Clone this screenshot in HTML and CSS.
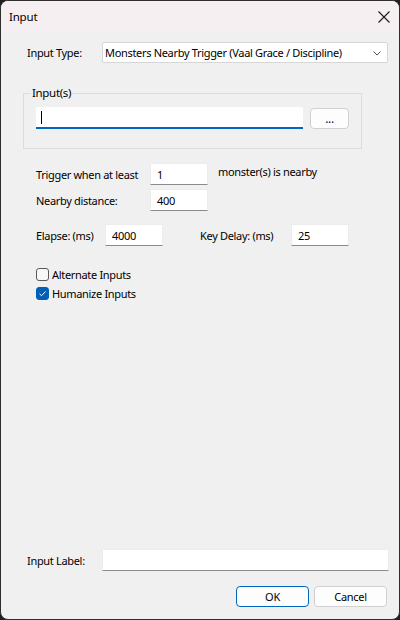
FILE: index.html
```html
<!DOCTYPE html>
<html>
<head>
<meta charset="utf-8">
<link rel="stylesheet" href="styles.css">
</head>
<body>
<div class="window">
  <div class="titlebar">
    <span class="title">Input</span>
    <svg class="close" width="12" height="12" viewBox="0 0 12 12"><path d="M0.5 0.5 L11.5 11.5 M11.5 0.5 L0.5 11.5" stroke="#1a1a1a" stroke-width="1.1" fill="none"/></svg>
  </div>
  <div class="content">
    <div class="row type-row">
      <span class="label type-label">Input Type:</span>
      <div class="select">
        <span class="label">Monsters Nearby Trigger (Vaal Grace / Discipline)</span>
        <svg width="8" height="5" viewBox="0 0 8 5"><path d="M0.5 0.5 L4 4 L7.5 0.5" stroke="#555" stroke-width="1" fill="none"/></svg>
      </div>
    </div>

    <fieldset class="group">
      <legend>Input(s)</legend>
      <div class="group-row">
        <div class="edit focused"><span class="caret"></span></div>
        <div class="btn dots">...</div>
      </div>
    </fieldset>

    <div class="row trig-row">
      <span class="label w114">Trigger when at least</span>
      <div class="edit num">1</div>
      <span class="label after">monster(s) is nearby</span>
    </div>
    <div class="row near-row">
      <span class="label w114">Nearby distance:</span>
      <div class="edit num">400</div>
    </div>
    <div class="row elapse-row">
      <span class="label w69">Elapse: (ms)</span>
      <div class="edit num">4000</div>
      <span class="label keydelay">Key Delay: (ms)</span>
      <div class="edit num">25</div>
    </div>

    <div class="checks">
      <div class="check"><span class="box"></span><span>Alternate Inputs</span></div>
      <div class="check"><span class="box on"><svg width="13" height="13" viewBox="0 0 13 13"><path d="M3.5 6.8 L5.5 8.7 L9.5 4.5" stroke="#fff" stroke-width="1" fill="none"/></svg></span><span>Humanize Inputs</span></div>
    </div>

    <div class="spacer"></div>

    <div class="row label-row">
      <span class="label type-label">Input Label:</span>
      <div class="edit wide"></div>
    </div>
    <div class="buttons">
      <div class="btn push default">OK</div>
      <div class="btn push">Cancel</div>
    </div>
  </div>
</div>
</body>
</html>
```
FILE: styles.css
```css
html, body {
  margin: 0;
  padding: 0;
  background: #202020;
}
body {
  font-family: "Noto Sans", "Open Sans", sans-serif;
  font-size: 11px;
  letter-spacing: -0.32px;
  color: #000;
}
.window {
  width: 400px;
  height: 620px;
  box-sizing: border-box;
  border: 1px solid #2e2e2e;
  border-radius: 8px;
  overflow: hidden;
  display: flex;
  flex-direction: column;
  background: #f0f0f0;
}
.titlebar {
  height: 30px;
  flex: none;
  background: #f6eff2;
  display: flex;
  align-items: center;
  justify-content: space-between;
  padding: 0 9px 0 8px;
}
.title {
  font-size: 11.5px;
  letter-spacing: -0.2px;
}
.close {
  margin-top: 2px;
}
.content {
  flex: 1;
  display: flex;
  flex-direction: column;
  padding: 0 11px 12px 0;
}
.row {
  display: flex;
  align-items: center;
}
.label {
  white-space: nowrap;
  flex: none;
}
.type-row {
  margin-top: 11px;
  padding-left: 26px;
}
.type-label {
  width: 75px;
}
.select {
  width: 286px;
  height: 21px;
  box-sizing: border-box;
  background: #fff;
  border: 1px solid #d6d6d6;
  border-radius: 2px;
  display: flex;
  align-items: center;
  justify-content: space-between;
  padding: 0 6px 0 2px;
  color: #000;
}
.select svg {
  margin-top: 1px;
}
.group {
  margin: 22px 0 0 22px;
  width: 339px;
  height: 64px;
  box-sizing: border-box;
  border: 1px solid #dcdcdc;
  padding: 0 0 0 12px;
}
.group legend {
  padding: 0 1px;
  margin-left: -5px;
  line-height: 16px;
  font-size: 11.5px;
}
.group-row {
  display: flex;
  align-items: flex-start;
  margin-top: 6px;
}
.edit {
  height: 22px;
  box-sizing: border-box;
  background: #fff;
  border: 1px solid #ececec;
  border-bottom-color: #8a8a8a;
  display: flex;
  align-items: center;
  padding-left: 6px;
  flex: none;
}
.edit.focused {
  width: 267px;
  border: none;
  border-bottom: 2px solid #0067c0;
  padding-left: 5px;
}
.caret {
  width: 1px;
  height: 13px;
  background: #000;
}
.btn {
  box-sizing: border-box;
  background: #fdfdfd;
  border: 1px solid #d0d0d0;
  border-radius: 4px;
  display: flex;
  align-items: center;
  justify-content: center;
  flex: none;
}
.dots {
  width: 39px;
  height: 21px;
  margin: 1px 0 0 7px;
  color: #101060;
  font-size: 12px;
}
.trig-row {
  margin-top: 14px;
  padding-left: 35px;
}
.w114 {
  width: 114px;
}
.num {
  width: 58px;
}
.after {
  margin-left: 10px;
  margin-top: -5px;
}
.near-row {
  margin-top: 4px;
  padding-left: 35px;
}
.elapse-row {
  margin-top: 13px;
  padding-left: 35px;
}
.w69 {
  width: 69px;
}
.keydelay {
  margin-left: 37px;
  width: 91px;
}
.checks {
  margin-top: 21px;
  padding-left: 35px;
  display: flex;
  flex-direction: column;
  gap: 4px;
}
.check {
  display: flex;
  align-items: center;
  height: 15px;
}
.box {
  width: 13px;
  height: 13px;
  box-sizing: border-box;
  border: 1px solid #5a5a5a;
  border-radius: 3px;
  margin-right: 3px;
  background: #f7f7f7;
  display: block;
  flex: none;
}
.box.on {
  background: #005fb8;
  border-color: #005fb8;
}
.box.on svg {
  display: block;
  margin: -1px 0 0 -1px;
}
.spacer {
  flex: 1;
}
.label-row {
  padding-left: 26px;
}
.wide {
  width: 287px;
  height: 22px;
}
.buttons {
  display: flex;
  justify-content: flex-end;
  gap: 5px;
  margin-top: 15px;
  padding-right: 1px;
}
.push {
  width: 73px;
  height: 21px;
}
.push.default {
  border-color: #0067c0;
}
```
